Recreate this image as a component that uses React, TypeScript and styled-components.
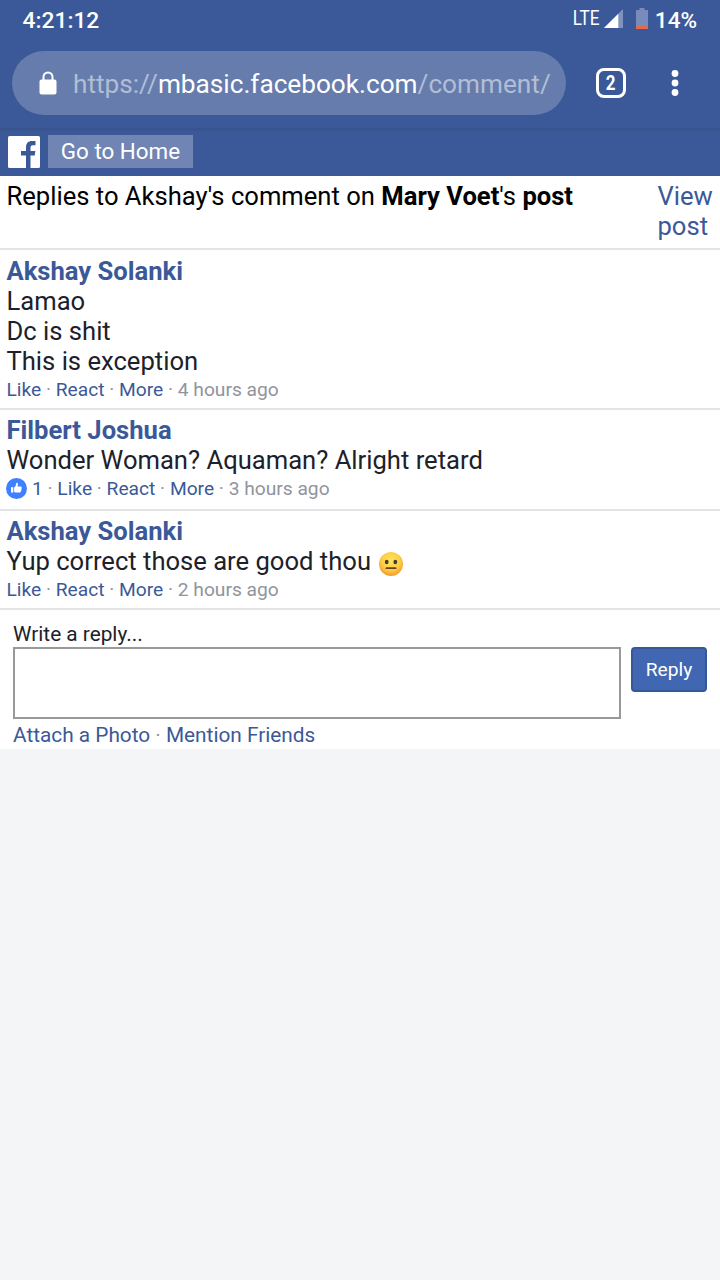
import React from "react";
import styled, { createGlobalStyle } from "styled-components";

const comments = [
  {
    name: "Akshay Solanki",
    lines: ["Lamao", "Dc is shit", "This is exception"],
    time: "4 hours ago",
    height: 160,
    top: 6,
  },
  {
    name: "Filbert Joshua",
    lines: ["Wonder Woman? Aquaman? Alright retard"],
    time: "3 hours ago",
    likes: 1,
    height: 101,
    top: 5,
  },
  {
    name: "Akshay Solanki",
    lines: ["Yup correct those are good thou"],
    time: "2 hours ago",
    emoji: true,
    height: 99,
    top: 5,
  },
];

function LikeBadge() {
  return (
    <Badge viewBox="0 0 21 21">
      <circle cx="10.5" cy="10.5" r="10.5" fill="#4080ff" />
      <path
        d="M5 9.2h2.3v5.3H5zM8.1 9.4c1.3-.8 1.9-2.2 2-4 0-.8 1.6-1 1.9.6.1.9-.2 1.8-.5 2.5h3.2c1.1 0 1.4 1.2.7 1.7.5.5.4 1.2-.2 1.6.3.6.1 1.1-.5 1.4.2.9-.3 1.3-1.2 1.3H9.8c-.7 0-1.2-.2-1.7-.5z"
        fill="#fff"
      />
    </Badge>
  );
}

function NeutralFace() {
  return (
    <Face viewBox="0 0 26 26">
      <defs>
        <radialGradient id="face" cx="50%" cy="38%" r="62%">
          <stop offset="0" stopColor="#ffe45c" />
          <stop offset="0.6" stopColor="#fdcf45" />
          <stop offset="1" stopColor="#f2992c" />
        </radialGradient>
      </defs>
      <circle cx="13" cy="13" r="12" fill="url(#face)" />
      <ellipse cx="8.7" cy="11" rx="1.9" ry="2.3" fill="#493a32" />
      <ellipse cx="17.3" cy="11" rx="1.9" ry="2.3" fill="#493a32" />
      <rect x="7.5" y="16.2" width="11" height="1.9" rx="0.9" fill="#6b3f1d" />
    </Face>
  );
}

export default function App() {
  return (
    <Screen>
      <GlobalStyle />
      <StatusBar>
        <Clock>4:21:12</Clock>
        <Network>LTE</Network>
        <SignalIcon viewBox="0 0 20 20">
          <path d="M0 19 19 0v19z" fill="#7f93c0" />
          <path d="M0 19 14.3 4.7V19z" fill="#fff" />
        </SignalIcon>
        <BatteryIcon viewBox="0 0 12 21">
          <path d="M0 2h3.5V0h5v2H12v16H0z" fill="#788bba" />
          <path d="M0 18h12v3H0z" fill="#e3694f" />
        </BatteryIcon>
        <Percent>14%</Percent>
      </StatusBar>
      <Toolbar>
        <AddressBar>
          <LockIcon viewBox="0 0 18 24">
            <path d="M4.5 10V6a4.5 4.5 0 0 1 9 0v4" fill="none" stroke="#fff" strokeWidth="2" />
            <rect x="0.5" y="8.5" width="17" height="15" rx="2" fill="#fff" />
          </LockIcon>
          <Url>
            <Faded>https://</Faded>mbasic.facebook.com<Faded>/comment/</Faded>
          </Url>
        </AddressBar>
        <TabButton>
          <TabCount>2</TabCount>
        </TabButton>
        <MenuIcon viewBox="0 0 8 28">
          <circle cx="4" cy="4.5" r="3.4" />
          <circle cx="4" cy="14" r="3.4" />
          <circle cx="4" cy="23.5" r="3.4" />
        </MenuIcon>
      </Toolbar>
      <SiteHeader>
        <Logo viewBox="0 0 32 32">
          <rect width="32" height="32" rx="1.5" fill="#fff" />
          <path
            d="M18 32V19.5h-5V15h5v-3.5C18 7 20.5 5 24 5h3.5v4.3H25c-1.8 0-2.500.8-2.500 2.500V15h4.900l-.7 4.500h-4.200V32z"
            fill="#3b5998"
          />
        </Logo>
        <HomeButton>Go to Home</HomeButton>
      </SiteHeader>
      <Title>
        <TitleText>
          Replies to Akshay's comment on <b>Mary Voet</b>'s <b>post</b>
        </TitleText>
        <ViewPost>View post</ViewPost>
      </Title>
      {comments.map((comment) => (
        <Comment key={comment.time} $height={comment.height} $top={comment.top}>
          <Name>{comment.name}</Name>
          {comment.lines.map((line) => (
            <Line key={line}>
              {line}
              {comment.emoji && <NeutralFace />}
            </Line>
          ))}
          <Meta>
            {comment.likes && (
              <>
                <LikeBadge />
                <Link>{comment.likes}</Link> ·{" "}
              </>
            )}
            <Link>Like</Link> · <Link>React</Link> · <Link>More</Link> · {comment.time}
          </Meta>
        </Comment>
      ))}
      <ReplyForm>
        <Label htmlFor="reply">Write a reply...</Label>
        <ReplyRow>
          <ReplyInput id="reply" />
          <ReplyButton>Reply</ReplyButton>
        </ReplyRow>
        <Actions>
          <Link>Attach a Photo</Link> · <Link>Mention Friends</Link>
        </Actions>
      </ReplyForm>
    </Screen>
  );
}

const GlobalStyle = createGlobalStyle`
  * {
    box-sizing: border-box;
  }
  body {
    margin: 0;
    background: #f4f5f7;
    font-family: Roboto, "Liberation Sans", sans-serif;
  }
`;

const Screen = styled.div`
  width: 720px;
  min-height: 1280px;
  background: #f4f5f7;
`;

const StatusBar = styled.div`
  display: flex;
  align-items: center;
  height: 40px;
  padding: 0 23px 0 22.5px;
  background: #3b5998;
  color: #fff;
`;

const Clock = styled.span`
  flex: 1;
  font-size: 22.8px;
  font-weight: 500;
`;

const Network = styled.span`
  font-size: 19.5px;
  margin: -3px 4px 0 0;
  transform: scaleX(0.88);
  transform-origin: right;
`;

const SignalIcon = styled.svg`
  width: 20px;
  height: 20px;
  margin: -2px 12px 0 0;
`;

const BatteryIcon = styled.svg`
  width: 12px;
  height: 21px;
  margin: -3px 0 0;
`;

const Percent = styled.span`
  width: 49px;
  font-size: 22.5px;
  font-weight: 500;
  text-align: right;
`;

const Toolbar = styled.div`
  display: flex;
  align-items: center;
  height: 88px;
  padding: 0 41px 2px 12px;
  background: #3b5998;
`;

const AddressBar = styled.div`
  display: flex;
  align-items: center;
  width: 554px;
  height: 64px;
  padding-left: 27px;
  border-radius: 32px;
  background: #657cad;
`;

const LockIcon = styled.svg`
  width: 18px;
  height: 24px;
  margin: -1px 16px 0 0;
`;

const Url = styled.div`
  color: #fff;
  font-size: 26.2px;
  white-space: nowrap;
  padding-top: 2px;
`;

const Faded = styled.span`
  color: #b2bed6;
`;

const TabButton = styled.div`
  display: flex;
  align-items: center;
  justify-content: center;
  width: 30px;
  height: 30px;
  margin-left: 30px;
  border: 3px solid #fff;
  border-radius: 8px;
`;

const TabCount = styled.span`
  color: #fff;
  font-size: 20px;
  font-weight: 700;
  line-height: 24px;
  transform: scaleX(0.85);
`;

const MenuIcon = styled.svg`
  width: 8px;
  height: 28px;
  margin-left: auto;
  fill: #fff;
`;

const SiteHeader = styled.div`
  display: flex;
  align-items: center;
  gap: 8px;
  height: 48px;
  padding-left: 8px;
  background: linear-gradient(#37528c, #3b5998 4px);
`;

const Logo = styled.svg`
  width: 32px;
  height: 32px;
`;

const HomeButton = styled.button`
  width: 145px;
  height: 33px;
  margin-bottom: 2px;
  padding: 0;
  border: none;
  background: #7085b4;
  color: #fff;
  font-family: inherit;
  font-size: 22.4px;
`;

const Title = styled.div`
  display: flex;
  justify-content: space-between;
  height: 74px;
  padding: 5px 6.5px 0;
  border-bottom: 2px solid #e3e4e6;
  background: #fff;
  color: #000;
  font-size: 25.6px;
  line-height: 30px;
`;

const TitleText = styled.div``;

const ViewPost = styled.a`
  width: 56px;
  color: #3b5998;
`;

const Comment = styled.div<{ $height: number; $top: number }>`
  height: ${({ $height }) => $height}px;
  padding: ${({ $top }) => $top}px 6.5px 0;
  border-bottom: 2px solid #e3e4e6;
  background: #fff;
`;

const Name = styled.div`
  color: #3b5998;
  font-size: 25.6px;
  font-weight: 700;
  line-height: 30px;
`;

const Line = styled.div`
  height: 30px;
  color: #1d2129;
  font-size: 25.6px;
  line-height: 30px;
`;

const Face = styled.svg`
  width: 26px;
  height: 26px;
  margin-left: 7px;
  vertical-align: -7px;
`;

const Meta = styled.div`
  padding-top: 1px;
  color: #90949c;
  font-size: 19.2px;
  line-height: 26px;
`;

const Badge = styled.svg`
  width: 21px;
  height: 21px;
  margin: 0 5.5px 0 -1px;
  vertical-align: -4px;
`;

const Link = styled.a`
  color: #3b5998;
`;

const ReplyForm = styled.div`
  height: 139px;
  padding: 12px 13px 0;
  background: #fff;
`;

const Label = styled.label`
  display: block;
  color: #1d2129;
  font-size: 20.8px;
  line-height: 25px;
`;

const ReplyRow = styled.div`
  display: flex;
  gap: 10px;
`;

const ReplyInput = styled.textarea`
  width: 608px;
  height: 72px;
  border: 2px solid #999;
  border-radius: 0;
  background: #fff;
  resize: none;
`;

const ReplyButton = styled.button`
  width: 76px;
  height: 45px;
  padding: 0;
  border: 2px solid #365899;
  border-radius: 4px;
  background: #4267b2;
  color: #fff;
  font-family: inherit;
  font-size: 19.2px;
`;

const Actions = styled.div`
  padding-top: 1px;
  color: #90949c;
  font-size: 20.8px;
  line-height: 30px;
`;
